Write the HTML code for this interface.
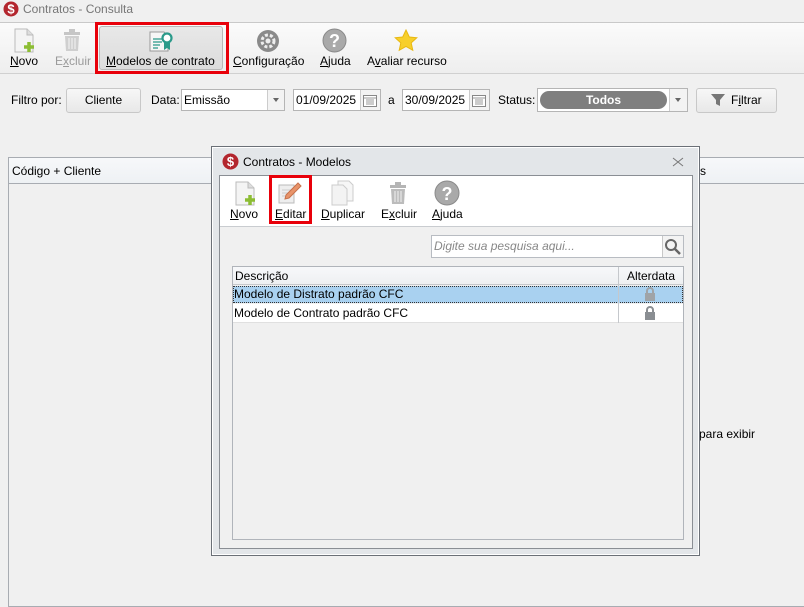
<!DOCTYPE html>
<html><head><meta charset="utf-8"><style>
*{box-sizing:border-box;margin:0;padding:0}
body{width:804px;height:603px;background:#f0f0f0;font-family:"Liberation Sans",sans-serif;font-size:12px;color:#000;position:relative;overflow:hidden}
.a{position:absolute}
u{text-decoration:underline}
.tb{font-size:12px;text-align:center}
.btn{background:linear-gradient(#f7f7f7,#e8e8e8);border:1px solid #c8c8c8;border-radius:3px}
.inp{background:#fff;border:1px solid #b5b5b5}
</style></head><body>
<div class="a" style="left:0;top:0;width:804px;height:22px;background:#f0f0f0"></div>
<svg class="a" style="left:3px;top:1px" width="16" height="16"><circle cx="8" cy="8" r="7.5" fill="#b3262e"/><text x="8" y="12.5" font-size="13" font-weight="bold" fill="#fff" text-anchor="middle" font-family="Liberation Sans">$</text></svg>
<div class="a" style="left:23px;top:2px;color:#777;font-size:12px">Contratos - Consulta</div>
<div class="a" style="left:0;top:22px;width:804px;height:1px;background:#c9c9c9"></div>
<div class="a" style="left:0;top:23px;width:804px;height:50px;background:linear-gradient(#fbfbfb,#eeeeee)"></div>
<div class="a" style="left:0;top:73px;width:804px;height:1px;background:#d0d0d0"></div>
<svg class="a" style="left:13px;top:28px" width="24" height="26"><path d="M2 1h12l6 6v17H2z" fill="#f4f4f4" stroke="#bbb"/><path d="M14 1v6h6" fill="#ddd" stroke="#bbb"/><path d="M16 14v10M11 19h10" stroke="#8cbd33" stroke-width="3.5"/></svg>
<div class="a tb" style="left:10px;top:54px"><u>N</u>ovo</div>
<svg class="a" style="left:62px;top:29px" width="20" height="24"><rect x="2" y="3" width="16" height="3" fill="#c6c6c6"/><rect x="7" y="0" width="6" height="3" fill="#c6c6c6"/><path d="M3 7h14l-1 15H4z" fill="#cfcfcf"/><path d="M7 9v11M10 9v11M13 9v11" stroke="#e8e8e8" stroke-width="1.5"/></svg>
<div class="a tb" style="left:55px;top:54px;color:#9a9a9a">E<u>x</u>cluir</div>
<div class="a" style="left:95px;top:22px;width:134px;height:52px;border:3px solid #e8000a"></div>
<div class="a" style="left:99px;top:26px;width:124px;height:44px;background:linear-gradient(#e8e8e8,#dcdcdc);border:1px solid #b8b8b8;border-radius:3px"></div>
<svg class="a" style="left:148px;top:29px" width="26" height="24"><path d="M2 3h14l4 4v15H2z" fill="#f6f6f6" stroke="#999"/><path d="M5 10h9M5 13h9M5 16h7M5 19h5" stroke="#2b9a8a" stroke-width="1.2"/><circle cx="19" cy="9" r="4.5" fill="#fff" stroke="#2b9a8a" stroke-width="2.2"/><path d="M16 13v8l3-2 3 2v-8" fill="#2b9a8a"/></svg>
<div class="a tb" style="left:106px;top:54px"><u>M</u>odelos de contrato</div>
<svg class="a" style="left:256px;top:29px" width="24" height="24"><circle cx="12" cy="12" r="11" fill="#8a8a8a"/><circle cx="12" cy="12" r="6" fill="none" stroke="#eee" stroke-width="3" stroke-dasharray="3 2"/><circle cx="12" cy="12" r="2.5" fill="#eee"/></svg>
<div class="a tb" style="left:233px;top:54px"><u>C</u>onfiguração</div>
<svg class="a" style="left:322px;top:28px" width="25" height="25"><circle cx="12.5" cy="12.5" r="11.5" fill="#a9a9a9" stroke="#8a8a8a"/><text x="12.5" y="19" font-size="18" font-weight="bold" fill="#fff" text-anchor="middle" font-family="Liberation Sans">?</text></svg>
<div class="a tb" style="left:320px;top:54px"><u>A</u>juda</div>
<svg class="a" style="left:394px;top:29px" width="24" height="23"><path d="M12 1l3.3 7 7.5.8-5.6 5.1 1.6 7.4L12 17.5l-6.8 3.8 1.6-7.4L1.2 8.8 8.7 8z" fill="#f7cf2b" stroke="#e8b812"/></svg>
<div class="a tb" style="left:367px;top:54px">A<u>v</u>aliar recurso</div>
<div class="a" style="left:11px;top:93px">Filtro por:</div>
<div class="a btn" style="left:66px;top:88px;width:75px;height:25px;text-align:center;line-height:23px;font-size:12px">Cliente</div>
<div class="a" style="left:151px;top:93px">Data:</div>
<div class="a inp" style="left:181px;top:89px;width:104px;height:22px"><span style="position:absolute;left:2px;top:3px">Emissão</span><div style="position:absolute;right:0;top:0;width:17px;height:20px;border-left:1px solid #ccc;background:#f3f3f3"><div style="position:absolute;left:5px;top:8px;border:3px solid transparent;border-top:4px solid #666"></div></div></div>
<div class="a inp" style="left:293px;top:89px;width:88px;height:22px"><span style="position:absolute;left:2px;top:3px">01/09/2025</span><div style="position:absolute;right:0;top:0;width:20px;height:20px;border-left:1px solid #ccc;background:#f3f3f3"></div><svg style="position:absolute;right:2px;top:2px" width="16" height="16"><rect x="1.5" y="3.5" width="13" height="11" fill="#fff" stroke="#888"/><path d="M2 6h12M4 8h8M4 10h8M4 12h8" stroke="#999"/></svg></div>
<div class="a" style="left:388px;top:93px">a</div>
<div class="a inp" style="left:402px;top:89px;width:88px;height:22px"><span style="position:absolute;left:2px;top:3px">30/09/2025</span><div style="position:absolute;right:0;top:0;width:20px;height:20px;border-left:1px solid #ccc;background:#f3f3f3"></div><svg style="position:absolute;right:2px;top:2px" width="16" height="16"><rect x="1.5" y="3.5" width="13" height="11" fill="#fff" stroke="#888"/><path d="M2 6h12M4 8h8M4 10h8M4 12h8" stroke="#999"/></svg></div>
<div class="a" style="left:498px;top:93px">Status:</div>
<div class="a inp" style="left:537px;top:88px;width:151px;height:24px"><div style="position:absolute;left:2px;top:2px;width:127px;height:18px;background:#7f7f7f;border-radius:9px;color:#fff;font-weight:bold;text-align:center;line-height:18px;font-size:12px">Todos</div><div style="position:absolute;right:0;top:0;width:18px;height:22px;border-left:1px solid #ccc;background:#f3f3f3"><div style="position:absolute;left:5px;top:9px;border:3px solid transparent;border-top:4px solid #666"></div></div></div>
<div class="a btn" style="left:696px;top:88px;width:81px;height:25px"></div>
<svg class="a" style="left:710px;top:93px" width="16" height="14"><path d="M1 1h14l-5 6v6l-4-2V7z" fill="#777"/></svg>
<div class="a" style="left:731px;top:93px;font-size:12px">F<u>i</u>ltrar</div>
<div class="a" style="left:8px;top:157px;width:800px;height:450px;border:1px solid #a8acb2;background:#f0f0f0"></div>
<div class="a" style="left:9px;top:158px;width:800px;height:26px;background:linear-gradient(#f7f8fa,#eef1f4);border-bottom:1px solid #a8acb2"></div>
<div class="a" style="left:12px;top:164px;font-size:12px">Código + Cliente</div>
<div class="a" style="left:700px;top:164px;font-size:12px">s</div>
<div class="a" style="left:699px;top:427px;font-size:12px">para exibir</div>
<div class="a" style="left:211px;top:146px;width:489px;height:410px;background:#e3e6e9;border:1px solid #6b7077;box-shadow:0 0 0 1px #fff inset"></div>
<svg class="a" style="left:222px;top:153px" width="17" height="17"><circle cx="8.5" cy="8.5" r="8" fill="#b3262e"/><text x="8.5" y="13" font-size="13" font-weight="bold" fill="#fff" text-anchor="middle" font-family="Liberation Sans">$</text></svg>
<div class="a" style="left:243px;top:155px;font-size:12px">Contratos - Modelos</div>
<svg class="a" style="left:672px;top:157px" width="12" height="10"><path d="M1 1l10 8M11 1L1 9" stroke="#777" stroke-width="1"/></svg>
<div class="a" style="left:219px;top:175px;width:474px;height:374px;border:1px solid #8a8e94;background:#f0f0f0"></div>
<div class="a" style="left:220px;top:176px;width:472px;height:51px;background:#fff;border-bottom:1px solid #c9ccd0"></div>
<svg class="a" style="left:234px;top:181px" width="24" height="26"><path d="M2 1h12l6 6v17H2z" fill="#f4f4f4" stroke="#bbb"/><path d="M14 1v6h6" fill="#ddd" stroke="#bbb"/><path d="M16 14v10M11 19h10" stroke="#8cbd33" stroke-width="3.5"/></svg>
<div class="a tb" style="left:230px;top:207px"><u>N</u>ovo</div>
<div class="a" style="left:269px;top:175px;width:43px;height:49px;border:3px solid #e8000a"></div>
<svg class="a" style="left:277px;top:181px" width="26" height="24"><path d="M2 4h15v18H2z" fill="#eee" stroke="#bbb"/><path d="M5 9h9M5 12h9M5 15h7" stroke="#ccc"/><path d="M21 2l3 3-12 12-4 1 1-4z" fill="#e8946a" stroke="#c7714a"/></svg>
<div class="a tb" style="left:275px;top:207px"><u>E</u>ditar</div>
<svg class="a" style="left:330px;top:180px" width="26" height="26"><path d="M8 1h11l4 4v16H8z" fill="#f6f6f6" stroke="#ccc"/><path d="M2 5h11l4 4v16H2z" fill="#f3f3f3" stroke="#ccc"/></svg>
<div class="a tb" style="left:321px;top:207px"><u>D</u>uplicar</div>
<svg class="a" style="left:388px;top:182px" width="20" height="24"><rect x="2" y="3" width="16" height="3" fill="#b5b5b5"/><rect x="7" y="0" width="6" height="3" fill="#b5b5b5"/><path d="M3 7h14l-1 15H4z" fill="#bcbcbc"/><path d="M7 9v11M10 9v11M13 9v11" stroke="#e0e0e0" stroke-width="1.5"/></svg>
<div class="a tb" style="left:381px;top:207px">E<u>x</u>cluir</div>
<svg class="a" style="left:434px;top:180px" width="26" height="26"><circle cx="13" cy="13" r="12" fill="#a9a9a9" stroke="#8a8a8a"/><text x="13" y="20" font-size="18" font-weight="bold" fill="#fff" text-anchor="middle" font-family="Liberation Sans">?</text></svg>
<div class="a tb" style="left:432px;top:207px"><u>A</u>juda</div>
<div class="a inp" style="left:431px;top:235px;width:253px;height:23px;border-color:#b8bcc2"><span style="position:absolute;left:2px;top:3px;font-style:italic;color:#888">Digite sua pesquisa aqui...</span><div style="position:absolute;right:0;top:0;width:21px;height:21px;border-left:1px solid #c8c8c8;background:#f3f3f3"></div><svg style="position:absolute;right:2px;top:2px" width="17" height="17"><circle cx="7" cy="7" r="5" fill="none" stroke="#666" stroke-width="2"/><path d="M11 11l5 5" stroke="#666" stroke-width="2.5"/></svg></div>
<div class="a" style="left:232px;top:266px;width:452px;height:274px;border:1px solid #b0b4ba;background:#f0f0f0"></div>
<div class="a" style="left:233px;top:267px;width:450px;height:18px;background:linear-gradient(#f7f8fa,#eef0f2);border-bottom:1px solid #c5c8cc"></div>
<div class="a" style="left:618px;top:267px;width:1px;height:56px;background:#c5c8cc"></div>
<div class="a" style="left:235px;top:269px">Descrição</div>
<div class="a" style="left:627px;top:269px">Alterdata</div>
<div class="a" style="left:233px;top:286px;width:450px;height:17px;background:#a9d1f0;outline:1px dotted #333;outline-offset:-1px"></div>
<div class="a" style="left:233px;top:304px;width:450px;height:19px;background:#fff;border-bottom:1px solid #e0e0e0"></div>
<div class="a" style="left:618px;top:286px;width:1px;height:37px;background:#c5c8cc"></div>
<div class="a" style="left:234px;top:287px">Modelo de Distrato padrão CFC</div>
<div class="a" style="left:234px;top:306px">Modelo de Contrato padrão CFC</div>
<svg class="a" style="left:644px;top:287px" width="12" height="14"><path d="M3 6V4a3 3 0 0 1 6 0v2" fill="none" stroke="#a0a4a8" stroke-width="2"/><rect x="1" y="6" width="10" height="8" fill="#a0a4a8"/></svg>
<svg class="a" style="left:644px;top:306px" width="12" height="14"><path d="M3 6V4a3 3 0 0 1 6 0v2" fill="none" stroke="#8a8e92" stroke-width="2"/><rect x="1" y="6" width="10" height="8" fill="#8a8e92"/></svg>
</body></html>
